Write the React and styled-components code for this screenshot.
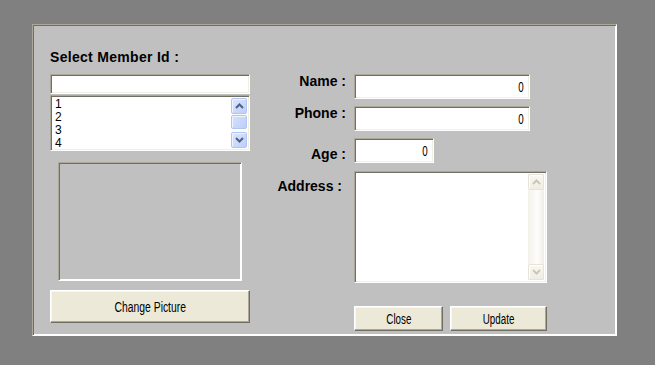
import React from 'react';
import styled, { createGlobalStyle } from 'styled-components';

const GlobalStyle = createGlobalStyle`
  html, body {
    margin: 0;
    padding: 0;
    background: #808080;
  }
  body {
    min-height: 100vh;
    font-family: 'Liberation Sans', Arial, sans-serif;
  }
`;

const Screen = styled.div`
  padding: 24px 0 0 32px;
`;

const Panel = styled.div`
  box-sizing: border-box;
  width: 585px;
  height: 312px;
  display: flex;
  align-items: flex-start;
  background: #c0c0c0;
  border: 1px solid;
  border-color: #aca899 #ffffff #ffffff #aca899;
  box-shadow: inset 1px 1px #716f64, inset -1px -1px #ffffff;
  padding: 1px;
`;

const LeftColumn = styled.div`
  display: flex;
  flex-direction: column;
  width: 200px;
  margin: 24px 0 0 16px;
`;

const RightColumn = styled.div`
  display: flex;
  flex-direction: column;
  margin: 48px 0 0 20px;
`;

const Label = styled.div`
  font-family: 'Liberation Sans', Arial, sans-serif;
  font-weight: bold;
  font-size: 14px;
  line-height: 15px;
  letter-spacing: ${(p) => p.$spacing || 0}px;
  color: #000;
  white-space: nowrap;
`;

// the original uses a condensed face, squeeze the regular one
const Narrow = styled.span`
  display: inline-block;
  font-family: 'Liberation Sans', Arial, sans-serif;
  font-size: ${(p) => p.$size || 14}px;
  transform: scaleX(${(p) => p.$scale || 0.74});
  transform-origin: ${(p) => p.$origin || 'center'};
`;

const Sunken = styled.div`
  box-sizing: border-box;
  background: ${(p) => p.$bg || '#ffffff'};
  border: 1px solid;
  border-color: #aca899 #ffffff #ffffff #aca899;
  box-shadow: inset 1px 1px #716f64, inset -1px -1px #f1efe2;
`;

const ComboInput = styled(Sunken)`
  width: 200px;
  height: 20px;
  margin-top: 9px;
`;

const ListBox = styled(Sunken)`
  width: 200px;
  height: 56px;
  margin-top: 1px;
  padding: 2px;
  display: flex;
`;

const ListItems = styled.div`
  flex: 1;
  padding-left: 2px;
  font-family: 'Liberation Sans', Arial, sans-serif;
  font-size: 12px;
  line-height: 13px;
  color: #000;
`;

const ScrollBar = styled.div`
  width: 16px;
  display: flex;
  flex-direction: column;
  background: ${(p) => (p.$disabled ? 'linear-gradient(to right, #f3f1ea, #fdfdfb 60%, #eeede6)' : '#fbfbf8')};
`;

const ScrollButton = styled.div`
  box-sizing: border-box;
  height: 16px;
  display: flex;
  align-items: center;
  justify-content: center;
  border-radius: 2px;
  border: 1px solid ${(p) => (p.$disabled ? '#e6e4d8' : '#b1c5f4')};
  background: ${(p) =>
    p.$disabled
      ? 'linear-gradient(#f8f7f1, #efede4)'
      : 'linear-gradient(135deg, #dde6fe, #bccefa)'};
  box-shadow: inset 1px 1px ${(p) => (p.$disabled ? '#ffffff' : '#eef3ff')};
`;

const ScrollTrack = styled.div`
  flex: 1;
  padding-top: 1px;
`;

const Thumb = styled.div`
  box-sizing: border-box;
  height: 14px;
  border-radius: 2px;
  border: 1px solid #b1c5f4;
  background: linear-gradient(135deg, #d6e1fd, #bccefa);
  box-shadow: inset 1px 1px #eef3ff;
`;

const PictureBox = styled(Sunken)`
  width: 184px;
  height: 119px;
  margin: 11px 0 0 8px;
  box-shadow: inset 1px 1px #716f64, inset -1px -1px #ffffff;
`;

const Button = styled.button`
  box-sizing: border-box;
  width: ${(p) => p.$w}px;
  height: ${(p) => p.$h}px;
  margin: 0;
  padding: 0;
  background: #ece9d8;
  border: 1px solid;
  border-color: #ffffff #716f64 #716f64 #ffffff;
  box-shadow: inset -1px -1px #aca899, inset 1px 1px #f7f6ef;
  color: #000;
  white-space: nowrap;
`;

const PictureButton = styled(Button)`
  margin-top: 9px;
`;

const FieldRow = styled.div`
  display: flex;
  align-items: flex-start;
  margin-top: ${(p) => p.$gap || 0}px;
`;

const RowLabel = styled(Label)`
  width: 76px;
  box-sizing: border-box;
  text-align: right;
  padding-top: ${(p) => p.$top || 0}px;
  padding-right: ${(p) => p.$right || 0}px;
  margin-right: 8px;
`;

const TextField = styled(Sunken)`
  width: ${(p) => p.$w}px;
  height: ${(p) => p.$h}px;
  padding: 3px 5px 0 0;
  text-align: right;
  line-height: 18px;
  color: #000;
`;

const TextArea = styled(Sunken)`
  width: 193px;
  height: 112px;
  padding: 2px;
  display: flex;
  justify-content: flex-end;
`;

const ButtonRow = styled.div`
  display: flex;
  gap: 7px;
  margin: 23px 0 0 84px;
`;

const Chevron = ({ down, color }) => (
  <svg width="9" height="6" viewBox="0 0 9 6">
    <polyline
      points={down ? '1,1 4.5,4.5 8,1' : '1,5 4.5,1.5 8,5'}
      fill="none"
      stroke={color}
      strokeWidth="2"
    />
  </svg>
);

export default function App() {
  return (
    <>
      <GlobalStyle />
      <Screen>
        <Panel>
          <LeftColumn>
            <Label $spacing={0.3}>Select Member Id :</Label>
            <ComboInput />
            <ListBox>
              <ListItems>
                <div>1</div>
                <div>2</div>
                <div>3</div>
                <div>4</div>
              </ListItems>
              <ScrollBar>
                <ScrollButton>
                  <Chevron color="#4d6185" />
                </ScrollButton>
                <ScrollTrack>
                  <Thumb />
                </ScrollTrack>
                <ScrollButton>
                  <Chevron down color="#4d6185" />
                </ScrollButton>
              </ScrollBar>
            </ListBox>
            <PictureBox $bg="#c0c0c0" />
            <PictureButton $w={200} $h={33}>
              <Narrow>Change Picture</Narrow>
            </PictureButton>
          </LeftColumn>

          <RightColumn>
            <FieldRow>
              <RowLabel>Name :</RowLabel>
              <TextField $w={176} $h={25}>
                <Narrow $origin="right" $scale={0.7}>0</Narrow>
              </TextField>
            </FieldRow>
            <FieldRow $gap={7}>
              <RowLabel>Phone :</RowLabel>
              <TextField $w={176} $h={25}>
                <Narrow $origin="right" $scale={0.7}>0</Narrow>
              </TextField>
            </FieldRow>
            <FieldRow $gap={7}>
              <RowLabel $top={9}>Age :</RowLabel>
              <TextField $w={80} $h={25}>
                <Narrow $origin="right" $scale={0.7}>0</Narrow>
              </TextField>
            </FieldRow>
            <FieldRow $gap={8}>
              <RowLabel $top={8} $right={4}>Address :</RowLabel>
              <TextArea>
                <ScrollBar $disabled>
                  <ScrollButton $disabled>
                    <Chevron color="#cac7b8" />
                  </ScrollButton>
                  <ScrollTrack />
                  <ScrollButton $disabled>
                    <Chevron down color="#cac7b8" />
                  </ScrollButton>
                </ScrollBar>
              </TextArea>
            </FieldRow>
            <ButtonRow>
              <Button $w={89} $h={25}>
                <Narrow $scale={0.7}>Close</Narrow>
              </Button>
              <Button $w={97} $h={25}>
                <Narrow $scale={0.7}>Update</Narrow>
              </Button>
            </ButtonRow>
          </RightColumn>
        </Panel>
      </Screen>
    </>
  );
}
